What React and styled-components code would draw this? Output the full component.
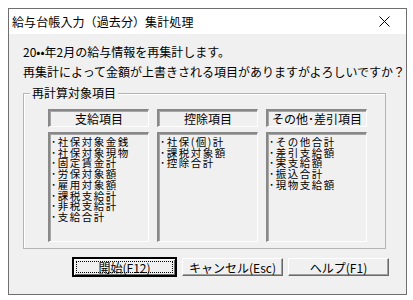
import React from "react";
import styled, { createGlobalStyle } from "styled-components";

const Global = createGlobalStyle`
  html, body { margin: 0; padding: 0; background: #ffffff; }
  body { font-family: "Noto Sans CJK JP", "Noto Sans", sans-serif; color: #000; }
  * { box-sizing: border-box; }
`;

const Page = styled.div`
  padding: 8px 0 0 8px;
`;

const Window = styled.div`
  width: 399px;
  height: 287px;
  border: 1px solid #6f6f6f;
  background: #f0f0f0;
  display: flex;
  flex-direction: column;
`;

const TitleBar = styled.div`
  height: 25px;
  background: #ffffff;
  display: flex;
  align-items: center;
  justify-content: space-between;
  padding: 0 16px 0 3px;
  font-size: 12px;
  line-height: 25px;
  letter-spacing: 0.1px;
`;

const Body = styled.div`
  flex: 1;
  display: flex;
  flex-direction: column;
  padding: 8px 17px 0 14px;
`;

const Message = styled.div`
  font-size: 12px;
  line-height: 20px;
  white-space: nowrap;
`;

const Group = styled.div`
  position: relative;
  margin-top: 11px;
  width: 363px;
  height: 156px;
  border: 1px solid #b4b4b4;
  box-shadow: inset 1px 1px 0 #ffffff;
  padding: 15px 0 0 24px;
`;

const Legend = styled.span`
  position: absolute;
  top: -8px;
  left: 6px;
  padding: 0 2px;
  background: #f0f0f0;
  font-size: 12px;
  line-height: 14px;
`;

const Columns = styled.div`
  display: grid;
  grid-template-columns: repeat(3, 101px);
  column-gap: 8px;
`;

const Column = styled.div`
  display: flex;
  flex-direction: column;
  gap: 5px;
`;

const Sunken = styled.div`
  border-top: 2px solid #888888;
  border-left: 2px solid #888888;
  border-right: 1px solid #ffffff;
  border-bottom: 1px solid #ffffff;
  box-shadow: inset 1px 1px 0 #a6a6a6;
  background: #f0f0f0;
`;

const Header = styled(Sunken)`
  height: 18px;
  font-size: 12px;
  line-height: 15px;
  text-align: center;
  white-space: nowrap;
`;

const List = styled(Sunken)`
  height: 110px;
  padding: 3px 0 0 1px;
  font-size: 10.5px;
  letter-spacing: 1.5px;
  line-height: 10.7px;
  white-space: nowrap;
`;

const Item = styled.div``;

const ButtonRow = styled.div`
  margin-top: 8px;
  display: flex;
  justify-content: flex-end;
  align-items: center;
  gap: 5px;
`;

const Button = styled.div`
  width: ${(p) => (p.$default ? 105 : 101)}px;
  height: ${(p) => (p.$default ? 20 : 18)}px;
  display: flex;
  align-items: center;
  justify-content: center;
  font-size: 12px;
  background: #f0f0f0;
  border-top: 1px solid #ffffff;
  border-left: 1px solid #ffffff;
  border-right: 1px solid #6a6a6a;
  border-bottom: 1px solid #6a6a6a;
  box-shadow: inset -1px -1px 0 #a0a0a0;
  ${(p) =>
    p.$default &&
    `
    border: 2px solid #000;
    box-shadow: inset 1px 1px 0 #fff, inset -1px -1px 0 #6a6a6a;
    padding: 2px;
  `}
`;

const Focus = styled.div`
  width: 100%;
  height: 100%;
  border: 1px dotted #000;
  display: flex;
  align-items: center;
  justify-content: center;
`;

const CloseIcon = () => (
  <svg width="11" height="11" viewBox="0 0 11 11">
    <path d="M0.5 0.5 L10.5 10.5 M10.5 0.5 L0.5 10.5" stroke="#000" strokeWidth="1" fill="none" />
  </svg>
);

const columns = [
  {
    title: "支給項目",
    items: ["社保対象金銭", "社保対象現物", "固定賃金計", "労保対象額", "雇用対象額", "課税支給計", "非税支給計", "支給合計"],
  },
  { title: "控除項目", items: ["社保(個)計", "課税対象額", "控除合計"] },
  { title: "その他･差引項目", items: ["その他合計", "差引支給額", "実支給額", "振込合計", "現物支給額"] },
];

export default function App() {
  return (
    <>
      <Global />
      <Page>
        <Window>
          <TitleBar>
            <span>給与台帳入力（過去分）集計処理</span>
            <CloseIcon />
          </TitleBar>
          <Body>
            <Message>20••年2月の給与情報を再集計します。</Message>
            <Message>再集計によって金額が上書きされる項目がありますがよろしいですか？</Message>
            <Group>
              <Legend>再計算対象項目</Legend>
              <Columns>
                {columns.map((c) => (
                  <Column key={c.title}>
                    <Header>{c.title}</Header>
                    <List>
                      {c.items.map((i) => (
                        <Item key={i}>･{i}</Item>
                      ))}
                    </List>
                  </Column>
                ))}
              </Columns>
            </Group>
            <ButtonRow>
              <Button $default>
                <Focus>開始(F12)</Focus>
              </Button>
              <Button>キャンセル(Esc)</Button>
              <Button>ヘルプ(F1)</Button>
            </ButtonRow>
          </Body>
        </Window>
      </Page>
    </>
  );
}
